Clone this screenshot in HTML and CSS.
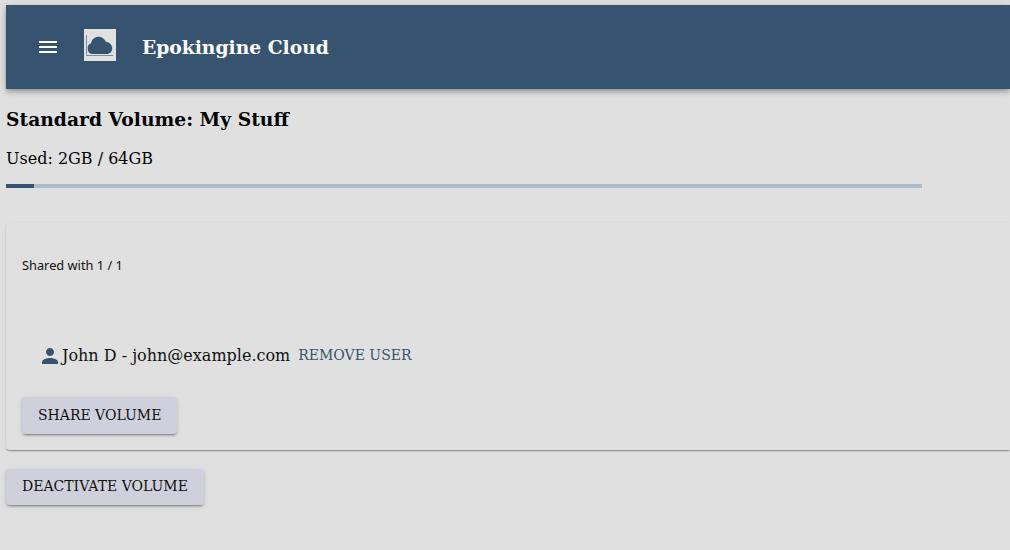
FILE: index.html
```html
<!DOCTYPE html>
<html lang="en">
<head>
  <meta charset="UTF-8" />
  <meta name="viewport" content="width=device-width, initial-scale=1.0"/>
  <title>Epokingine Cloud</title>
  <link rel="stylesheet" href="styles.css">
</head>
<body>

  <header class="toolbar">
    <button class="menu-btn" aria-label="menu">
      <svg viewBox="0 0 24 24" width="24" height="24"><path fill="#fff" d="M3 18h18v-2H3v2zm0-5h18v-2H3v2zm0-7v2h18V6H3z"/></svg>
    </button>
    <div class="logo">
      <svg viewBox="0 0 32 32" width="32" height="32">
        <path fill="none" stroke="#7d8aa2" stroke-width="1" d="M2.500 6v20.500H29"/>
        <path fill="#36536f" d="M8 25a4.500 5.500 0 0 1-1-10.800C8 10 11 7.700 14.500 7.700c3.500 0 6 2 7.300 5C25.500 13 28.300 16 28.300 19.500c0 3-2.500 5.500-5.300 5.500z"/>
      </svg>
    </div>
    <span class="app-title">Epokingine Cloud</span>
  </header>

  <h1 class="volume-title">Standard Volume: My Stuff</h1>
  <p class="usage">Used: 2GB / 64GB</p>
  <div class="progress"><div class="progress-fill" style="width: 3.1%"></div></div>

  <section class="card">
    <p class="shared">Shared with 1 / 1</p>
    <div class="user-row">
      <svg class="user-icon" viewBox="0 0 24 24" width="24" height="24"><path fill="#36536f" d="M12 12c2.210 0 4-1.790 4-4s-1.790-4-4-4-4 1.790-4 4 1.790 4 4 4zm0 2c-2.670 0-8 1.340-8 4v2h16v-2c0-2.660-5.330-4-8-4z"/></svg>
      <span class="user-name">John D - john@example.com</span>
      <a class="text-btn">REMOVE USER</a>
    </div>
    <button class="raised-btn share-btn">SHARE VOLUME</button>
  </section>

  <button class="raised-btn deactivate-btn">DEACTIVATE VOLUME</button>

</body>
</html>
```

FILE: styles.css
```css
body {
  background: #e0e0e0;
  color: #111;
  font-family: "DejaVu Serif", serif;
  margin: 0;
  padding: 5px 0 20px 6px;
}

.toolbar {
  display: flex;
  align-items: center;
  height: 84px;
  padding-left: 30px;
  background: #36536f;
  color: #fff;
  box-shadow: 0 2px 4px -1px rgba(0,0,0,.2), 0 4px 5px 0 rgba(0,0,0,.14), 0 1px 10px 0 rgba(0,0,0,.12);
}

.menu-btn {
  display: flex;
  padding: 0;
  margin-right: 24px;
  border: none;
  background: none;
}

.logo {
  display: flex;
  width: 32px;
  height: 32px;
  margin-right: 26px;
  margin-bottom: 4px;
  background: #e0e0e0;
}

.app-title {
  font-size: 18.72px;
  font-weight: 700;
}

.volume-title {
  margin: 18px 0 0;
  font-size: 18.72px;
  line-height: 24px;
  color: #000;
}

.usage {
  margin: 16px 0 0;
  font-size: 16px;
  line-height: 24px;
  color: #000;
}

.progress {
  width: 916px;
  height: 4px;
  margin-top: 13px;
  background: #afbdca;
}

.progress-fill {
  height: 100%;
  background: #36536f;
}

.card {
  margin-top: 35px;
  padding: 34px 16px 16px;
  border-radius: 4px 0 0 4px;
  background: #e0e0e0;
  box-shadow: 0 2px 1px -1px rgba(0,0,0,.2), 0 1px 1px 0 rgba(0,0,0,.14), 0 1px 3px 0 rgba(0,0,0,.12);
}

.shared {
  margin: 0;
  font-family: "Noto Sans", sans-serif;
  font-size: 12.8px;
  line-height: 16px;
}

.user-row {
  display: flex;
  align-items: center;
  height: 36px;
  margin-top: 64px;
  padding-left: 16px;
}

.user-icon {
  flex-shrink: 0;
  margin-top: 2px;
}

.user-name {
  font-size: 16px;
}

.text-btn {
  margin-left: 8px;
  font-size: 14px;
  color: #36536f;
}

.raised-btn {
  display: block;
  height: 37px;
  padding: 0 16px 2px;
  border: none;
  border-radius: 4px;
  background: #d0d0dc;
  color: #111;
  font-family: "DejaVu Serif", serif;
  font-size: 14px;
  box-shadow: 0 3px 1px -2px rgba(0,0,0,.2), 0 2px 2px 0 rgba(0,0,0,.14), 0 1px 5px 0 rgba(0,0,0,.12);
}

.share-btn {
  margin-top: 24px;
}

.deactivate-btn {
  height: 36px;
  margin-top: 19px;
}
```
